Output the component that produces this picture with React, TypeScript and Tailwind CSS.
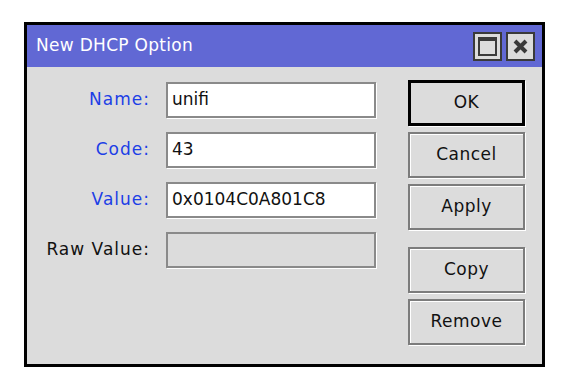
import React from "react";

const font = { fontFamily: '"DejaVu Sans", Verdana, sans-serif' };

const fields = [
  { label: "Name:", value: "unifi", blue: true },
  { label: "Code:", value: "43", blue: true },
  { label: "Value:", value: "0x0104C0A801C8", blue: true },
  { label: "Raw Value:", value: "", blue: false, disabled: true },
];

function Btn({ children, primary, className = "" }: { children: React.ReactNode; primary?: boolean; className?: string }) {
  return (
    <div
      className={
        "flex h-[46px] w-[117px] items-center justify-center bg-[#dcdcdc] text-[17px] tracking-[0.5px] text-[#111] " +
        (primary
          ? "border-[3px] border-black shadow-[1px_1px_0_#fff]"
          : "border-2 border-[#7c7c7c] shadow-[inset_1px_1px_0_#fff,1px_1px_0_#fff]") +
        " " +
        className
      }
    >
      {children}
    </div>
  );
}

export default function App() {
  return (
    <div className="min-h-screen bg-white pl-[24px] pt-[22px]" style={font}>
      <div className="flex h-[345px] w-[521px] flex-col border-[3px] border-black bg-[#dcdcdc]">
        <div className="flex h-[42px] items-center bg-[#6168d4] pl-[9px] pr-[7px]">
          <span className="flex-1 text-[17px] tracking-[0.3px] text-white">New DHCP Option</span>
          <div className="flex gap-[4px]">
            <div className="flex h-[29px] w-[29px] items-center justify-center border-2 border-[#3a3a3a] bg-[#dcdcdc]">
              <div className="h-[19px] w-[19px] border-2 border-t-[4px] border-[#3a3a3a]" />
            </div>
            <div className="flex h-[29px] w-[29px] items-center justify-center border-2 border-[#3a3a3a] bg-[#dcdcdc]">
              <svg width="15" height="15" viewBox="0 0 15 15">
                <path d="M2 2L13 13M13 2L2 13" stroke="#3a3a3a" strokeWidth="4" />
              </svg>
            </div>
          </div>
        </div>
        <div className="flex pt-[13px]">
          <div className="flex flex-col gap-[14px] pt-[2px]">
            {fields.map((f) => (
              <div key={f.label} className="flex items-center">
                <span
                  className={
                    "w-[124px] pr-[1px] text-right text-[17px] tracking-[1px] " +
                    (f.blue ? "text-[#1d3fe6]" : "text-[#111]")
                  }
                >
                  {f.label}
                </span>
                <div
                  className={
                    "ml-[15px] flex h-[36px] w-[210px] items-center border-2 border-[#8a8a8a] pl-[4px] text-[17px] text-[#111] shadow-[1px_1px_0_#fff] " +
                    (f.disabled ? "bg-[#dcdcdc]" : "bg-white")
                  }
                >
                  {f.value}
                </div>
              </div>
            ))}
          </div>
          <div className="ml-[32px] flex flex-col gap-[6px]">
            <Btn primary>OK</Btn>
            <Btn>Cancel</Btn>
            <Btn>Apply</Btn>
            <Btn className="mt-[11px]">Copy</Btn>
            <Btn>Remove</Btn>
          </div>
        </div>
      </div>
    </div>
  );
}
